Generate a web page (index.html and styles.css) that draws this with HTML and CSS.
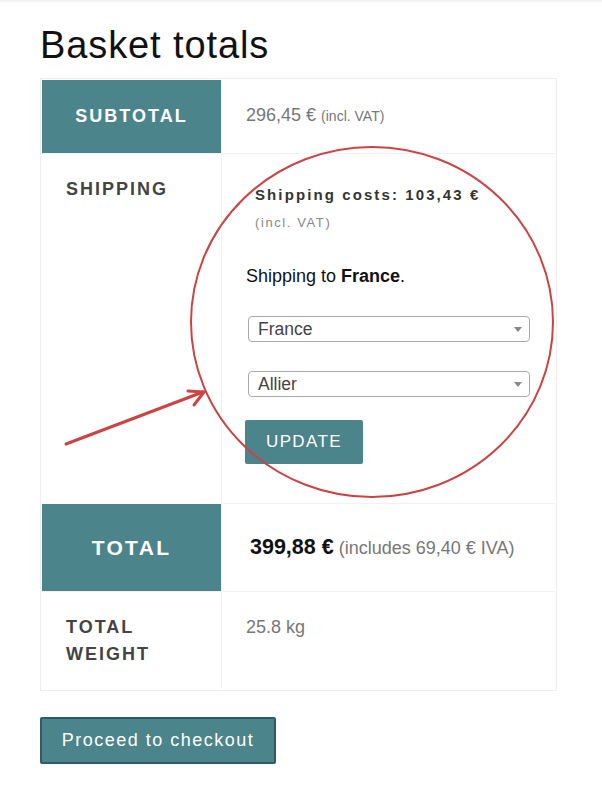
FILE: index.html
```html
<!DOCTYPE html>
<html lang="en">
<head>
<meta charset="utf-8">
<title>Basket totals</title>
<link rel="stylesheet" href="styles.css">
</head>
<body>
<div class="topline"></div>
<main class="cart">
  <h2 class="title">Basket totals</h2>
  <table class="totals">
    <tr>
      <th class="lbl lbl-accent">Subtotal</th>
      <td class="val"><span class="amount">296,45 €</span> <small class="tax">(incl. VAT)</small></td>
    </tr>
    <tr>
      <th class="lbl">Shipping</th>
      <td class="val ship">
        <div class="ship-cost">Shipping costs: 103,43 €</div>
        <div class="ship-tax">(incl. VAT)</div>
        <p class="ship-dest">Shipping to <strong>France</strong>.</p>
        <div class="select select-first"><span>France</span><i class="caret"></i></div>
        <div class="select select-second"><span>Allier</span><i class="caret"></i></div>
        <button class="btn-update" type="button">Update</button>
      </td>
    </tr>
    <tr class="row-total">
      <th class="lbl lbl-accent lbl-big">Total</th>
      <td class="val val-total"><strong class="grand">399,88 €</strong> <small class="incl">(includes 69,40 € IVA)</small></td>
    </tr>
    <tr class="row-weight">
      <th class="lbl">Total weight</th>
      <td class="val">25.8 kg</td>
    </tr>
  </table>
  <button class="btn-checkout" type="button">Proceed to checkout</button>
</main>
<svg class="annot" width="602" height="801" viewBox="0 0 602 801" aria-hidden="true">
  <ellipse cx="372" cy="322" rx="181" ry="175" fill="none" stroke="#cc4343" stroke-width="2"/>
  <g fill="none" stroke="#cc4343" stroke-width="3" stroke-linecap="round" stroke-linejoin="round">
    <path d="M66 444 L203 392"/>
    <path d="M188 391 L204 392 L194 405"/>
  </g>
</svg>
</body>
</html>
```

FILE: styles.css
```css
body {
  margin: 0;
  background: #fff;
  font-family: "Liberation Sans", Arial, Helvetica, sans-serif;
  color: #333;
}

.topline {
  height: 2px;
  background: #f3f3f3;
}

.cart {
  width: 517px;
  padding: 19px 40px 0 40px;
}

.title {
  margin: 0 0 9px;
  font-size: 38px;
  line-height: 48px;
  letter-spacing: 0.9px;
  font-weight: normal;
  color: #111;
}

.totals {
  width: 517px;
  border: 1px solid #ececec;
  padding: 1px;
  border-collapse: separate;
  border-spacing: 0;
}

.totals tr + tr > th,
.totals tr + tr > td {
  border-top: 1px solid #f2f2f2;
}

.lbl {
  width: 131px;
  padding: 22px 24px 23px;
  text-align: left;
  vertical-align: top;
  font-size: 18px;
  line-height: 27px;
  font-weight: bold;
  letter-spacing: 2px;
  text-transform: uppercase;
  color: #444;
}

.lbl-accent {
  background: #4b848b;
  color: #fff;
  text-align: center;
  vertical-align: middle;
}

.totals tr + tr > .lbl-accent {
  border-top-color: #fff;
}

.lbl-big {
  font-size: 21px;
  letter-spacing: 2.3px;
  padding: 29px 24px;
  line-height: 28px;
}

.val {
  padding: 22px 24px 23px;
  vertical-align: top;
  font-size: 18px;
  line-height: 27px;
  color: #777;
  border-left: 1px solid #f2f2f2;
}

.row-weight > .lbl,
.row-weight > .val {
  padding-bottom: 21px;
}

.tax {
  font-size: 14px;
}

.ship {
  padding-bottom: 39px;
}

.ship-cost {
  margin: 8px 0 0 9px;
  font-size: 15px;
  line-height: 22px;
  font-weight: bold;
  letter-spacing: 2.1px;
  color: #333;
}

.ship-tax {
  margin: 6px 0 0 9px;
  font-size: 13px;
  line-height: 22px;
  letter-spacing: 1.6px;
  color: #888;
}

.ship-dest {
  margin: 29px 0 0;
  font-size: 18px;
  line-height: 27px;
  color: #111;
}

.select {
  box-sizing: border-box;
  display: flex;
  align-items: center;
  justify-content: space-between;
  width: 282px;
  height: 26px;
  margin-left: 2px;
  padding: 0 7px 0 9px;
  border: 1px solid #aaa;
  border-radius: 4px;
  font-size: 17.5px;
  color: #444;
  background: #fff;
}

.select-first {
  margin-top: 26px;
}

.select-second {
  margin-top: 29px;
}

.caret {
  width: 0;
  height: 0;
  border-left: 4px solid transparent;
  border-right: 4px solid transparent;
  border-top: 5px solid #888;
}

.btn-update {
  display: block;
  margin-top: 23px;
  margin-left: -1px;
  width: 118px;
  height: 44px;
  padding: 0;
  border: none;
  border-radius: 2px;
  background: #4b848b;
  color: #fff;
  font-family: inherit;
  font-size: 17px;
  letter-spacing: 1.4px;
  text-transform: uppercase;
}

.val-total {
  padding: 29px 24px;
  line-height: 28px;
  vertical-align: middle;
}

.grand {
  margin-left: 4px;
  font-size: 21.5px;
  color: #111;
}

.incl {
  font-size: 18px;
}

.btn-checkout {
  display: block;
  margin-top: 26px;
  width: 236px;
  height: 47px;
  padding: 0;
  border: 2px solid #2e5c61;
  border-radius: 2px;
  background: #4b848b;
  color: #fff;
  font-family: inherit;
  font-size: 18px;
  letter-spacing: 1.5px;
}

.annot {
  position: absolute;
  top: 0;
  left: 0;
  pointer-events: none;
}
```
